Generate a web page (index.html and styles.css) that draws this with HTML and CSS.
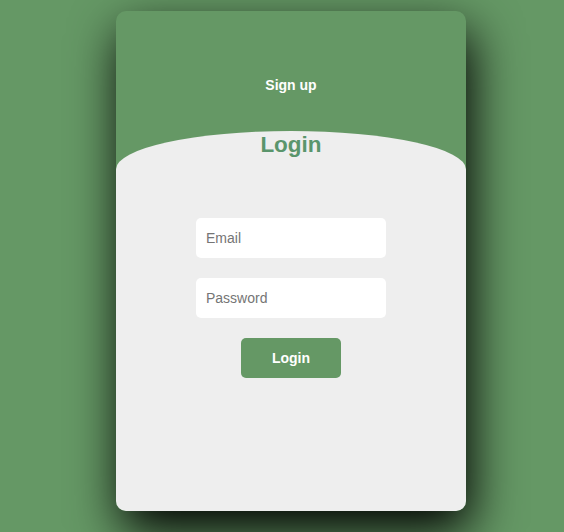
FILE: index.html
```html
<!DOCTYPE html>
<html>
<head>
<meta charset="utf-8">
<link rel="stylesheet" href="styles.css">
</head>
<body>
<div class="page">
  <div class="main">
    <div class="signup">
      <span class="signup-label">Sign up</span>
    </div>
    <div class="login">
      <h2 class="login-label">Login</h2>
      <form class="form">
        <input class="field" type="email" placeholder="Email">
        <input class="field" type="password" placeholder="Password">
        <button class="btn" type="button">Login</button>
      </form>
    </div>
  </div>
</div>
</body>
</html>
```

FILE: styles.css
```css
html, body {
  margin: 0;
  padding: 0;
  height: 100%;
}
body {
  background: #659865;
  font-family: "Liberation Sans", Arial, sans-serif;
}
.page {
  display: flex;
  justify-content: center;
  padding-top: 11px;
  padding-left: 18px;
}
.main {
  width: 350px;
  height: 500px;
  background: #659865;
  border-radius: 10px;
  overflow: hidden;
  box-shadow: 5px 20px 50px #000;
  display: flex;
  flex-direction: column;
}
.signup {
  height: 120px;
  flex-shrink: 0;
  display: flex;
  justify-content: center;
  align-items: flex-start;
}
.signup-label {
  margin-top: 66px;
  color: #fff;
  font-weight: bold;
  font-size: 14px;
  line-height: 16px;
}
.login {
  height: 460px;
  flex-shrink: 0;
  background: #eeeeee;
  border-radius: 60% / 10%;
  display: flex;
  flex-direction: column;
  align-items: center;
}
.login-label {
  margin: 1px 0 0;
  color: #5a956c;
  font-size: 22.5px;
  line-height: 26px;
  font-weight: bold;
}
.form {
  margin-top: 60px;
  display: flex;
  flex-direction: column;
  align-items: center;
  gap: 20px;
}
.field {
  width: 190px;
  height: 40px;
  box-sizing: border-box;
  border: none;
  outline: none;
  border-radius: 5px;
  background: #fff;
  padding: 0 10px;
  font-family: "Liberation Sans", Arial, sans-serif;
  font-size: 14px;
  color: #333;
}
.field::placeholder {
  color: #757575;
}
.btn {
  width: 100px;
  height: 40px;
  border: none;
  border-radius: 5px;
  background: #659865;
  color: #fff;
  font-family: "Liberation Sans", Arial, sans-serif;
  font-weight: bold;
  font-size: 14px;
  padding: 0;
}
```
